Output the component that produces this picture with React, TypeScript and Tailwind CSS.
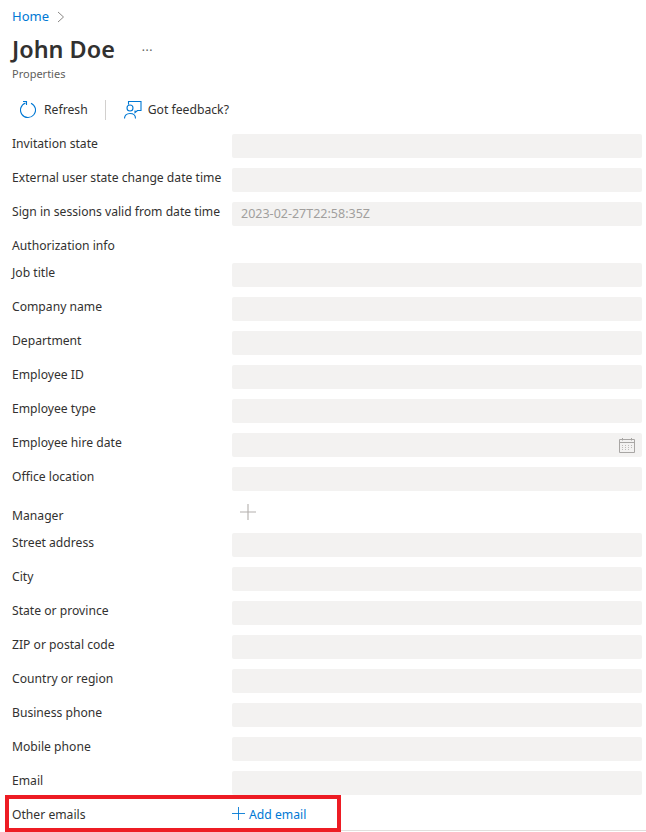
import React from 'react'

const font = { fontFamily: '"Noto Sans", sans-serif' }

function Label({ children, className = '' }: { children: React.ReactNode; className?: string }) {
  return (
    <div className={`mt-px w-[220px] shrink-0 whitespace-nowrap text-[12.15px] leading-[18px] text-[#323130] ${className}`}>
      {children}
    </div>
  )
}

function Field({ label, value, calendar }: { label: string; value?: string; calendar?: boolean }) {
  return (
    <div className="flex">
      <Label>{label}</Label>
      <div className="flex h-6 flex-1 items-center justify-between rounded-[2px] bg-[#f3f2f1] pl-[9px] pr-[6px] text-[12.5px] text-[#a19f9d]">
        <span>{value}</span>
        {calendar && <CalendarIcon />}
      </div>
    </div>
  )
}

function CalendarIcon() {
  return (
    <svg width="18" height="16" viewBox="0 0 18 16" fill="none" stroke="#a8a6a4">
      <path d="M1.5 2.5h15v13h-15zM1.5 5.5h15M4.5 1v2.500M13.500 1v2.500" />
      <g stroke="#bdbbb9" strokeDasharray="1 2">
        <path d="M4 8.500h11M4 10.500h11M4 12.500h8" />
      </g>
    </svg>
  )
}

function Plus({ color, size }: { color: string; size: number }) {
  return (
    <svg width={size} height={size} viewBox="0 0 16 16" stroke={color} strokeWidth="1.100" fill="none">
      <path d="M8 0v16M0 8h16" />
    </svg>
  )
}

const firstFields = [
  { label: 'Invitation state' },
  { label: 'External user state change date time' },
  { label: 'Sign in sessions valid from date time', value: '2023-02-27T22:58:35Z' },
]

const jobFields = [
  { label: 'Job title' },
  { label: 'Company name' },
  { label: 'Department' },
  { label: 'Employee ID' },
  { label: 'Employee type' },
  { label: 'Employee hire date', calendar: true },
  { label: 'Office location' },
]

const addressFields = [
  'Street address',
  'City',
  'State or province',
  'ZIP or postal code',
  'Country or region',
  'Business phone',
  'Mobile phone',
  'Email',
]

export default function App() {
  return (
    <div className="relative h-[832px] w-[646px] overflow-hidden bg-white pl-3 pr-1" style={font}>
      {/* Breadcrumb */}
      <div className="mt-[8px] flex h-[17px] items-center gap-[8px] text-[13px] text-[#0078d4]">
        <span>Home</span>
        <svg width="8" height="12" viewBox="0 0 8 12" fill="none" stroke="#8a8886">
          <path d="M1 1l5.500 5-5.500 5" />
        </svg>
      </div>

      {/* Title */}
      <div className="mt-[6px] flex h-[36px] items-center">
        <h1 className="text-[23.4px] font-semibold leading-[36px] text-[#323130]">John Doe</h1>
        <span className="mb-1 ml-[27px] text-[12px] tracking-[0.5px] text-[#605e5c]">...</span>
      </div>
      <div className="-mt-[1px] text-[11px] leading-[15px] text-[#605e5c]">Properties</div>

      {/* Toolbar */}
      <div className="mt-[17px] flex h-[24px] items-center text-[12.2px] text-[#323130]">
        <svg className="ml-[8px]" width="16" height="18" viewBox="0 0 16 18" fill="none" stroke="#0078d4" strokeWidth="1.100">
          <path d="M5.500 1.930A7.500 7.500 0 1 0 11 2.130M3 0.500h3.500V4" />
        </svg>
        <span className="ml-[8px]">Refresh</span>
        <div className="ml-[17px] h-[20px] w-px bg-[#d2d0ce]" />
        <svg className="ml-[18px]" width="18" height="18" viewBox="0 0 18 18" fill="none" stroke="#0078d4" strokeWidth="1.100">
          <path d="M4.500 3.500V0.500h12.500v9h-3.500l-2.500 2v-2M6 4a3 3 0 1 1 0 6 3 3 0 0 1 0-6zM0.500 17.500c0-3 2-5 5.500-5s5.500 2 5.500 5" />
        </svg>
        <span className="ml-[6px]">Got feedback?</span>
      </div>

      {/* Form */}
      <div className="mt-[12px] flex flex-col gap-[10px]">
        {firstFields.map((f) => (
          <Field key={f.label} {...f} />
        ))}
        <Label className="h-[16px]">Authorization info</Label>
        {jobFields.map((f) => (
          <Field key={f.label} {...f} />
        ))}
        <div className="flex h-[22px]">
          <div className="w-[220px] shrink-0 pt-[6px] text-[12.15px] leading-[18px] text-[#323130]">Manager</div>
          <div className="pt-[3px] pl-[8px]">
            <Plus color="#b3b0ad" size={16} />
          </div>
        </div>
        {addressFields.map((label) => (
          <Field key={label} label={label} />
        ))}
        <div className="flex items-center">
          <Label>Other emails</Label>
          <div className="flex items-center gap-[4px] text-[12.2px] leading-[18px] text-[#0078d4]">
            <div className="-mt-[2px]">
              <Plus color="#0078d4" size={13} />
            </div>
            <span>Add email</span>
          </div>
        </div>
      </div>

      {/* Highlight drawn over the screenshot */}
      <div className="absolute left-[5px] top-[795px] h-[37px] w-[336px] border-[4px] border-[#ed1c24]" />
      <div className="absolute left-[341px] top-[830px] h-px w-[305px] bg-[#e1dfdd]" />
    </div>
  )
}
